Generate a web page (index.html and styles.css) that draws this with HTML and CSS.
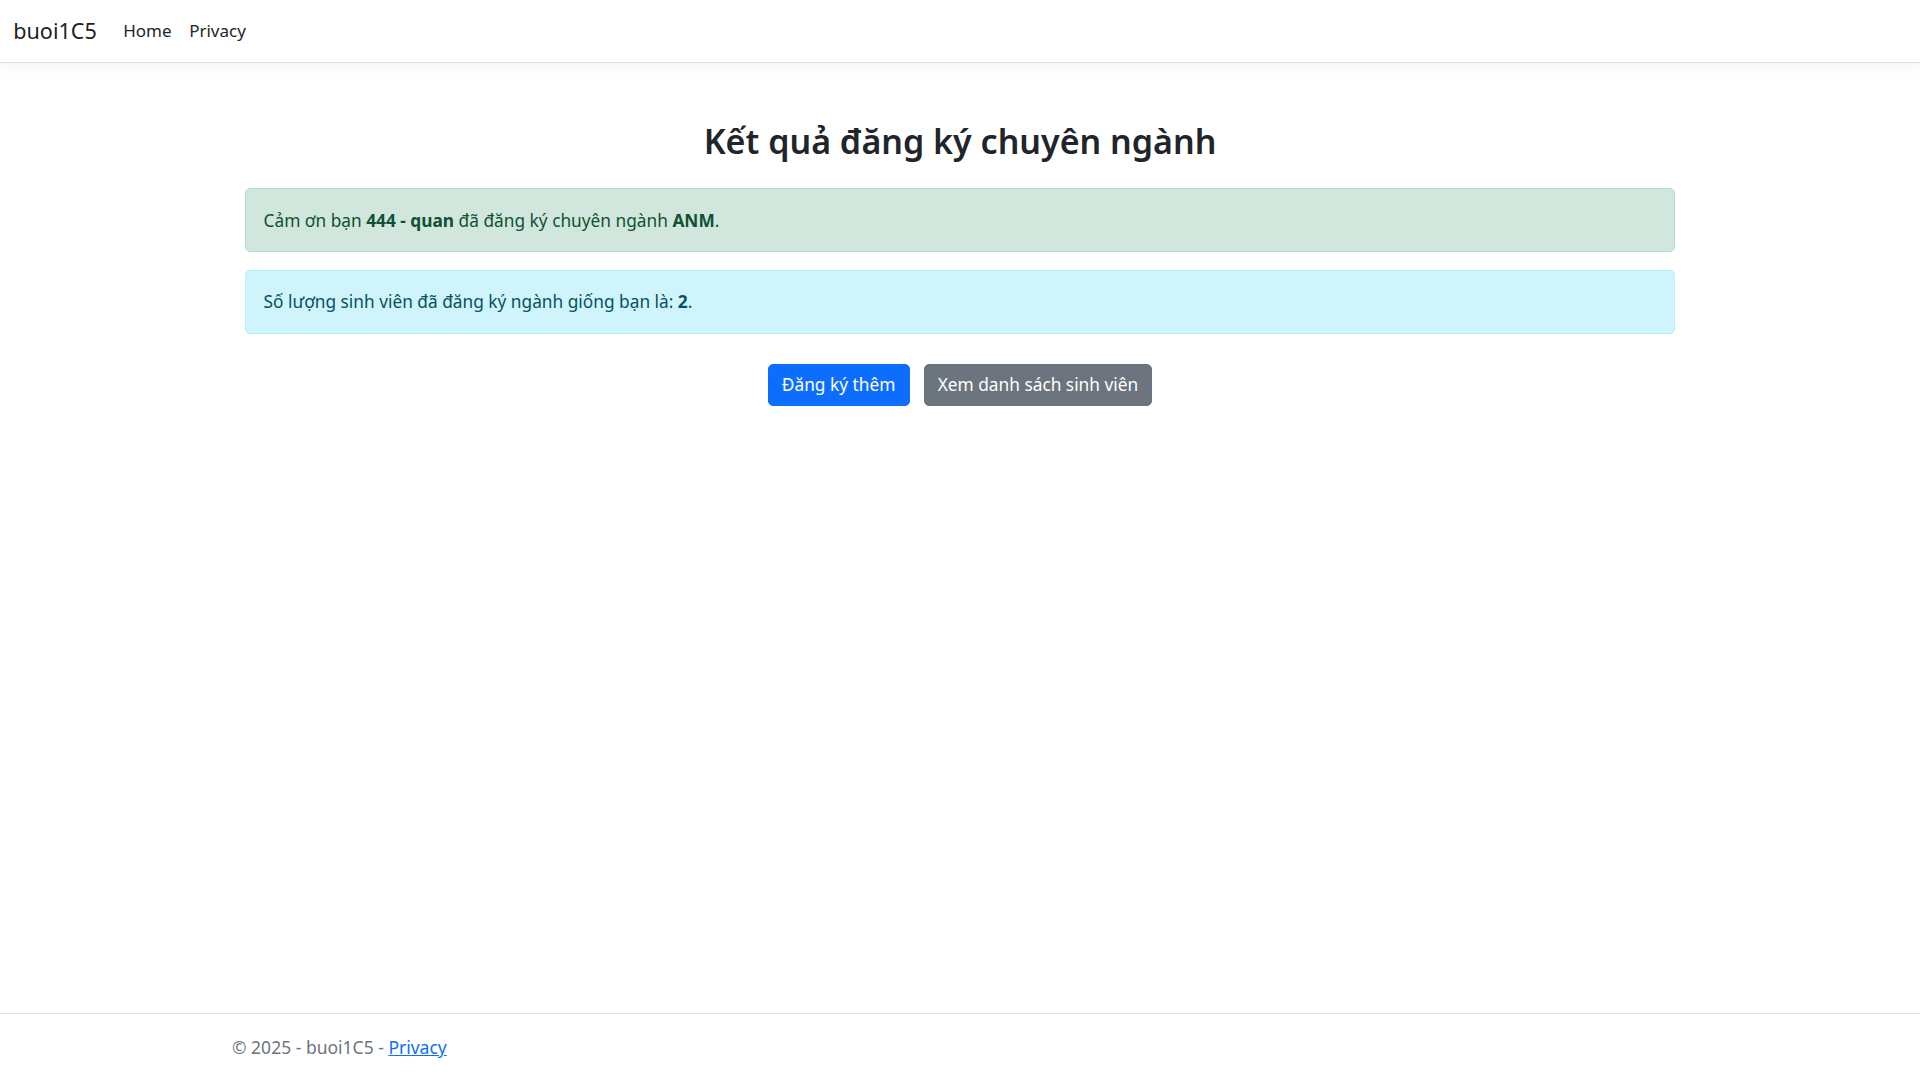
FILE: index.html
```html
<!DOCTYPE html>
<html lang="vi">
<head>
<meta charset="utf-8">
<title>Kết quả đăng ký - buoi1C5</title>
<link rel="stylesheet" href="styles.css">
</head>
<body>
<header>
  <nav class="navbar">
    <div class="navbar-inner">
      <a class="brand" href="#">buoi1C5</a>
      <ul class="nav">
        <li><a class="nav-link" href="#">Home</a></li>
        <li><a class="nav-link" href="#">Privacy</a></li>
      </ul>
    </div>
  </nav>
</header>
<div class="container">
  <main class="main">
    <h1 class="title">Kết quả đăng ký chuyên ngành</h1>
    <div class="alert alert-success">Cảm ơn bạn <strong>444 - quan</strong> đã đăng ký chuyên ngành <strong>ANM</strong>.</div>
    <div class="alert alert-info">Số lượng sinh viên đã đăng ký ngành giống bạn là: <strong>2</strong>.</div>
    <div class="actions">
      <a class="btn btn-primary" href="#">Đăng ký thêm</a>
      <a class="btn btn-secondary" href="#">Xem danh sách sinh viên</a>
    </div>
  </main>
</div>
<footer class="footer">
  <div class="footer-inner">© 2025 - buoi1C5 - <a href="#">Privacy</a></div>
</footer>
</body>
</html>
```

FILE: styles.css
```css
* { box-sizing: border-box; }
html, body { height: 100%; }
body {
  margin: 0;
  font-family: "Segoe UI", "Noto Sans", "Open Sans", sans-serif;
  font-size: 17.3px;
  line-height: 1.5;
  color: #212529;
  background: #fff;
  display: flex;
  flex-direction: column;
  min-height: 100vh;
}
a { text-decoration: none; }

.navbar {
  background: #fff;
  border-bottom: 1px solid #dee2e6;
  box-shadow: 0 4.4px 13.2px rgba(0, 0, 0, .05);
  padding: 8.8px 13.2px;
}
.navbar-inner { display: flex; align-items: center; }
.brand {
  font-size: 21.6px;
  line-height: 33px;
  padding: 5.5px 0;
  margin-right: 17.6px;
  color: rgba(0, 0, 0, .9);
}
.nav { display: flex; list-style: none; margin: 0; padding: 0; }
.nav-link {
  display: block;
  padding: 8.8px;
  font-size: 17px;
  line-height: 26.4px;
  color: #212529;
}

.container {
  max-width: 1430px;
  width: 100%;
  margin: 0 auto;
}
.main { padding-top: 52px; }
.title {
  margin: 0 0 20.6px;
  font-size: 34px;
  font-weight: 600;
  line-height: 52.8px;
  text-align: center;
}
.alert {
  padding: 17.6px;
  margin-bottom: 17.6px;
  border: 1px solid transparent;
  border-radius: 5px;
  line-height: 27px;
}
.alert strong { font-weight: 700; }
.alert-success { background: #d1e7dd; border-color: #badbcc; color: #0f5132; }
.alert-info { background: #cff4fc; border-color: #b6effb; color: #055160; }

.actions {
  display: flex;
  justify-content: center;
  gap: 14px;
  margin-top: 30px;
}
.btn {
  display: inline-block;
  padding: 6.6px 13.2px;
  line-height: 26.4px;
  border: 1px solid transparent;
  border-radius: 5px;
  color: #fff;
}
.btn-primary { background: #0d6efd; border-color: #0d6efd; }
.btn-secondary { background: #6c757d; border-color: #6c757d; }

.footer {
  margin-top: auto;
  border-top: 1px solid #dee2e6;
  line-height: 66px;
  font-size: 17.5px;
  color: #6c757d;
  white-space: nowrap;
}
.footer-inner { max-width: 1456px; margin: 0 auto; }
.footer a { color: #0d6efd; text-decoration: underline; }
```
